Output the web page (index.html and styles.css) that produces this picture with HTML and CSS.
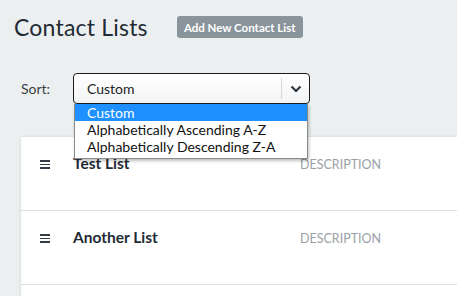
FILE: index.html
```html
<!DOCTYPE html>
<html lang="en">
<head>
  <meta charset="UTF-8" />
  <title>Contact Lists</title>
  <link rel="stylesheet" href="styles.css">
</head>
<body>

  <!-- Header -->
  <div class="header">
    <h1>Contact Lists</h1>
    <button class="add-btn">Add New Contact List</button>
  </div>

  <!-- Sort -->
  <div class="sort-row">
    <label class="sort-label">Sort:</label>
    <div class="select-wrap">
      <div class="select">
        <span class="select-value">Custom</span>
        <span class="select-arrow">
          <svg width="12" height="8" viewBox="0 0 12 8"><path d="M1.5 1.5 L6 6 L10.5 1.5" fill="none" stroke="#2b3640" stroke-width="2.2"/></svg>
        </span>
      </div>
      <ul class="options">
        <li class="active">Custom</li>
        <li>Alphabetically Ascending A-Z</li>
        <li>Alphabetically Descending Z-A</li>
      </ul>
    </div>
  </div>

  <!-- Lists -->
  <div class="card">
    <div class="list-row">
      <span class="handle"><i></i><i></i><i></i></span>
      <span class="list-name">Test List</span>
      <span class="list-desc">DESCRIPTION</span>
    </div>
    <div class="list-row">
      <span class="handle"><i></i><i></i><i></i></span>
      <span class="list-name">Another List</span>
      <span class="list-desc">DESCRIPTION</span>
    </div>
    <div class="list-row"></div>
  </div>

</body>
</html>
```

FILE: styles.css
```css
body {
  margin: 0;
  padding: 0;
  font-family: 'Lato', 'Noto Sans', sans-serif;
  background: #eceff0;
  color: #1f2b35;
  overflow: hidden;
}

/* Header */
.header {
  display: flex;
  align-items: center;
  padding: 14px 0 0 14px;
  height: 26px;
}

h1 {
  margin: 0;
  font-size: 23px;
  font-weight: 400;
  color: #1f2b35;
  letter-spacing: 0.2px;
}

.add-btn {
  margin-left: 29px;
  height: 22px;
  width: 126px;
  padding: 0;
  border: none;
  border-radius: 3px;
  background: #8a949b;
  color: #fff;
  font-family: inherit;
  font-weight: bold;
  font-size: 11.5px;
}

/* Sort */
.sort-row {
  display: flex;
  align-items: center;
  margin-top: 33px;
  padding-left: 21px;
}

.sort-label {
  font-size: 14px;
  color: #3a3f44;
  width: 52px;
}

.select-wrap {
  position: relative;
  z-index: 10;
}

.select {
  display: flex;
  align-items: center;
  width: 235px;
  height: 29px;
  border: 1px solid #1c1c1c;
  border-radius: 4px;
  background: linear-gradient(#ffffff, #f3f4f5);
}

.select-value {
  flex: 1;
  padding-left: 13px;
  font-size: 14px;
  color: #222;
}

.select-arrow {
  display: flex;
  align-items: center;
  justify-content: center;
  width: 27px;
  height: 21px;
  border-left: 1px solid #d6d9dc;
}

.options {
  position: absolute;
  top: 31px;
  left: 1px;
  width: 232px;
  margin: 0;
  padding: 0 0 3px 0;
  list-style: none;
  background: #fff;
  border: 1px solid #8b8b8b;
  border-top: none;
  box-shadow: 1px 2px 3px rgba(0, 0, 0, 0.25);
}

.options li {
  height: 17px;
  line-height: 17px;
  padding-left: 12px;
  font-size: 14px;
  color: #111;
}

.options li.active {
  background: #1e90ff;
  color: #fff;
}

/* Card */
.card {
  margin: 33px 0 0 21px;
  background: #fff;
  box-shadow: 0 0 3px rgba(0, 0, 0, 0.12);
}

.list-row {
  display: flex;
  align-items: flex-start;
  box-sizing: border-box;
  height: 74px;
  padding-top: 17px;
  border-bottom: 1px solid #dcdfe2;
}

.handle {
  display: flex;
  flex-direction: column;
  gap: 2px;
  width: 10px;
  margin: 6px 0 0 19px;
}

.handle i {
  display: block;
  height: 1.5px;
  background: #333c44;
}

.list-name {
  width: 227px;
  margin-left: 23px;
  font-size: 15.5px;
  font-weight: bold;
  color: #1f2b35;
}

.list-desc {
  font-size: 12.5px;
  color: #9aa1a6;
  margin-top: 3px;
}
```
